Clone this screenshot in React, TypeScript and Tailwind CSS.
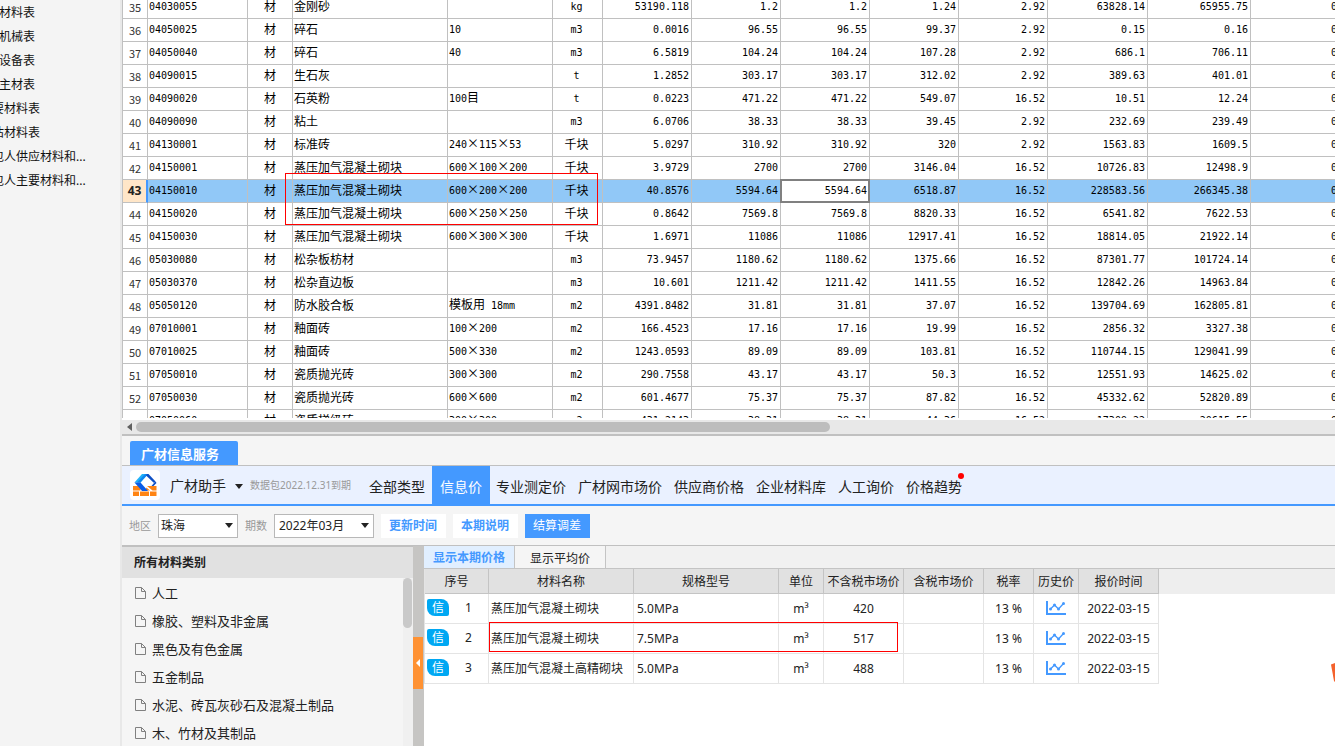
import React, { useState } from "react";

const UI_FONT = "font-['Noto_Sans','Noto_Sans_CJK_SC',sans-serif]";

const sideItems = [
  { label: "材料表", shift: "-ml-px" },
  { label: "机械表", shift: "-ml-px" },
  { label: "设备表", shift: "-ml-px" },
  { label: "主材表", shift: "-ml-px" },
  { label: "要材料表", shift: "-ml-2" },
  { label: "估材料表", shift: "-ml-2" },
  { label: "包人供应材料和...", shift: "-ml-2" },
  { label: "包人主要材料和...", shift: "-ml-2" },
];

// no, code, name, spec, unit, qty, price, market price, taxed price, rate, total, taxed total
const rows = [
  ["35", "04030055", "金刚砂", "", "kg", "53190.118", "1.2", "1.2", "1.24", "2.92", "63828.14", "65955.75"],
  ["36", "04050025", "碎石", "10", "m3", "0.0016", "96.55", "96.55", "99.37", "2.92", "0.15", "0.16"],
  ["37", "04050040", "碎石", "40", "m3", "6.5819", "104.24", "104.24", "107.28", "2.92", "686.1", "706.11"],
  ["38", "04090015", "生石灰", "", "t", "1.2852", "303.17", "303.17", "312.02", "2.92", "389.63", "401.01"],
  ["39", "04090020", "石英粉", "100目", "t", "0.0223", "471.22", "471.22", "549.07", "16.52", "10.51", "12.24"],
  ["40", "04090090", "粘土", "", "m3", "6.0706", "38.33", "38.33", "39.45", "2.92", "232.69", "239.49"],
  ["41", "04130001", "标准砖", "240×115×53", "千块", "5.0297", "310.92", "310.92", "320", "2.92", "1563.83", "1609.5"],
  ["42", "04150001", "蒸压加气混凝土砌块", "600×100×200", "千块", "3.9729", "2700", "2700", "3146.04", "16.52", "10726.83", "12498.9"],
  ["43", "04150010", "蒸压加气混凝土砌块", "600×200×200", "千块", "40.8576", "5594.64", "5594.64", "6518.87", "16.52", "228583.56", "266345.38"],
  ["44", "04150020", "蒸压加气混凝土砌块", "600×250×250", "千块", "0.8642", "7569.8", "7569.8", "8820.33", "16.52", "6541.82", "7622.53"],
  ["45", "04150030", "蒸压加气混凝土砌块", "600×300×300", "千块", "1.6971", "11086", "11086", "12917.41", "16.52", "18814.05", "21922.14"],
  ["46", "05030080", "松杂板枋材", "", "m3", "73.9457", "1180.62", "1180.62", "1375.66", "16.52", "87301.77", "101724.14"],
  ["47", "05030370", "松杂直边板", "", "m3", "10.601", "1211.42", "1211.42", "1411.55", "16.52", "12842.26", "14963.84"],
  ["48", "05050120", "防水胶合板", "模板用 18mm", "m2", "4391.8482", "31.81", "31.81", "37.07", "16.52", "139704.69", "162805.81"],
  ["49", "07010001", "釉面砖", "100×200", "m2", "166.4523", "17.16", "17.16", "19.99", "16.52", "2856.32", "3327.38"],
  ["50", "07010025", "釉面砖", "500×330", "m2", "1243.0593", "89.09", "89.09", "103.81", "16.52", "110744.15", "129041.99"],
  ["51", "07050010", "瓷质抛光砖", "300×300", "m2", "290.7558", "43.17", "43.17", "50.3", "16.52", "12551.93", "14625.02"],
  ["52", "07050030", "瓷质抛光砖", "600×600", "m2", "601.4677", "75.37", "75.37", "87.82", "16.52", "45332.62", "52820.89"],
  ["53", "07050060", "瓷质梯级砖", "300×300", "m2", "431.2143", "38.31", "38.31", "44.36", "16.52", "17309.22", "20615.55"],
];

const navTabs = ["专业测定价", "广材网市场价", "供应商价格", "企业材料库", "人工询价", "价格趋势"];

const categories = [
  "人工",
  "橡胶、塑料及非金属",
  "黑色及有色金属",
  "五金制品",
  "水泥、砖瓦灰砂石及混凝土制品",
  "木、竹材及其制品",
];

const prices = [
  { name: "蒸压加气混凝土砌块", spec: "5.0MPa", price: "420" },
  { name: "蒸压加气混凝土砌块", spec: "7.5MPa", price: "517" },
  { name: "蒸压加气混凝土高精砌块", spec: "5.0MPa", price: "488" },
];

// Latin runs take half the width of a Chinese character, the × sign a full one
const GridText = ({ text }: { text: string }) => (
  <>
    {text.split(/([\x20-\x7e]+|×)/).map((part, i) => {
      if (part === "×") {
        return (
          <span key={i} className="inline-block w-3 text-center">
            ×
          </span>
        );
      }
      if (/^[\x20-\x7e]+$/.test(part)) {
        return (
          <span key={i} className="text-[10px] whitespace-pre font-['DejaVu_Sans_Mono',monospace]">
            {part}
          </span>
        );
      }
      return part;
    })}
  </>
);

const Cell = ({ text, className = "" }: { text: string; className?: string }) => (
  <td className={`h-[23px] pt-0 pb-0.5 border-r border-b border-[#c0c0c0] overflow-hidden ${className}`}>
    <GridText text={text} />
  </td>
);

const MaterialGrid = () => (
  <div className="relative h-[418px] shrink-0 overflow-hidden bg-white">
    <table className="-mt-1 w-[1219px] table-fixed border-separate border-spacing-0 border-l border-[#c0c0c0] text-[12px] leading-[18px] text-black font-['Noto_Sans_CJK_SC',sans-serif]">
      <colgroup>
        <col className="w-[25px]" />
        <col className="w-[100px]" />
        <col className="w-[45px]" />
        <col className="w-[155px]" />
        <col className="w-[105px]" />
        <col className="w-[50px]" />
        <col className="w-[89px]" />
        <col className="w-[89px]" />
        <col className="w-[89px]" />
        <col className="w-[89px]" />
        <col className="w-[89px]" />
        <col className="w-[100px]" />
        <col className="w-[103px]" />
        <col className="w-[90px]" />
      </colgroup>
      <tbody>
        {rows.map(([no, code, name, spec, unit, ...nums]) => {
          const selected = no === "43";
          return (
            <tr key={no} className={selected ? "bg-[#91c8f7]" : "bg-white"}>
              <th
                scope="row"
                className={
                  selected
                    ? "h-[23px] p-0 border-r-2 border-b border-r-[#4499ff] border-b-[#c0c0c0] bg-[#ffe6c8] text-[12px] font-bold text-[#222] font-['Noto_Sans',sans-serif]"
                    : "h-[23px] p-0 border-r border-b border-[#c0c0c0] text-[11px] font-normal text-[#333]"
                }
              >
                {no}
              </th>
              <Cell text={code} className="pl-px" />
              <Cell text="材" className="text-center" />
              <Cell text={name} className="pl-px" />
              <Cell text={spec} className="pl-px" />
              <Cell text={unit} className="pr-0.5 text-center" />
              {nums.map((n, i) =>
                selected && i === 2 ? (
                  <td key={i} className="relative h-[23px] bg-white border-r border-b border-[#c0c0c0] pt-0 pb-0.5 pr-0.5 text-right">
                    <GridText text={n} />
                    <span className="absolute -inset-px border-2 border-[#808080]" />
                  </td>
                ) : (
                  <Cell key={i} text={n} className="pr-0.5 text-right" />
                )
              )}
              <Cell text="0" className="pr-[3px] text-right" />
            </tr>
          );
        })}
      </tbody>
    </table>
    {/* red mark over rows 43 and 44 */}
    <div className="absolute left-[163px] top-[173px] h-[52px] w-[313px] border border-[#f00]" />
  </div>
);

const DownArrow = ({ className = "" }: { className?: string }) => (
  <svg className={className} width="8" height="5" viewBox="0 0 8 5" fill="#222">
    <path d="M0 0h8L4 5z" />
  </svg>
);

const Logo = () => (
  <svg width="30" height="30" viewBox="0 0 30 30" className="shrink-0">
    <rect width="30" height="30" rx="4" fill="#fff" />
    <path d="M3 16h7.500v4.500H3zM3 21.500h6v4.500H3zM10 21.500h9v4.500h-9zM20 21.500h6.500v4.500H20z" fill="#ff8412" />
    <path d="M17 16h9.500v4.500h-4z" fill="#ff8412" />
    <path d="M16.500 17.500l3.500 3h-5z" fill="#ff8412" />
    <path d="M12 4h6l-7.500 8.500H4.500z" fill="#20b2f8" />
    <path d="M15 4h3l-7.500 8.500H7z" fill="#0f86f0" />
    <path d="M4.500 12.500h6L18 21h-6z" fill="#0a5ce6" />
    <path d="M17 4h1.500L25.500 11.500l-1.500 1.500L16 5.500z" fill="#0d4fc4" />
    <path d="M25.500 11.500l-1.500 1.500-2.500 3h2l3-3z" fill="#0d4fc4" />
  </svg>
);

const FileIcon = () => (
  <svg width="11" height="12" viewBox="0 0 11 12" fill="none" stroke="#808080" className="shrink-0">
    <path d="M.5 .5h6l4 4v7h-10z" />
    <path d="M6.500 .5v4h4" />
  </svg>
);

const TrendIcon = () => (
  <svg width="20" height="14" viewBox="0 0 20 14" fill="none" stroke="#4499ff">
    <path d="M1 0v13h19" strokeWidth="2" />
    <path d="M4.500 8L8.500 4l4 4L17.500 2.500" strokeWidth="1.300" />
    <g fill="#4499ff" stroke="none">
      <circle cx="4.500" cy="8" r="1.500" />
      <circle cx="8.500" cy="4" r="1.500" />
      <circle cx="12.500" cy="8" r="1.500" />
      <circle cx="17.500" cy="2.500" r="1.500" />
    </g>
  </svg>
);

const Header = () => (
  <header className="flex h-10 shrink-0 items-stretch bg-[#eaf1ff] border-b-2 border-[#4499ff] pl-2 text-[14px] text-[#222] whitespace-nowrap">
    <div className="flex items-center">
      <Logo />
      <button className="ml-2.5 flex items-center gap-[9px] pt-0.5">
        广材助手
        <DownArrow />
      </button>
      <span className="ml-[7px] w-[112px] text-[10px] text-[#999]">数据包2022.12.31到期</span>
    </div>
    <nav className="flex items-stretch">
      <button className="px-[7px] pt-1">全部类型</button>
      <button className="bg-[#4499ff] px-2 pt-1 text-white">信息价</button>
      {navTabs.map((tab) => (
        <button key={tab} className="relative px-1.5 pt-1">
          {tab}
          {tab === "价格趋势" && (
            <span className="absolute right-1 top-[7px] size-1.5 rounded-full bg-[#f00]" />
          )}
        </button>
      ))}
    </nav>
  </header>
);

const Filters = () => {
  const [area, setArea] = useState("珠海");
  const [period, setPeriod] = useState("2022年03月");
  return (
    <div className="flex h-[39px] shrink-0 items-center bg-[#f5f5f5] pl-[7px] text-[12px] text-[#222]">
      <label htmlFor="area" className="text-[11px] text-[#999]">
        地区
      </label>
      <div className="relative ml-[7px] w-20">
        <select
          id="area"
          value={area}
          onChange={(e) => setArea(e.target.value)}
          className="h-6 w-full appearance-none border border-[#b8b8b8] bg-white pl-0.5"
        >
          <option>珠海</option>
        </select>
        <DownArrow className="pointer-events-none absolute right-[5px] top-[9px]" />
      </div>
      <label htmlFor="period" className="ml-[7px] text-[11px] text-[#999]">
        期数
      </label>
      <div className="relative ml-[7px] w-[100px]">
        <select
          id="period"
          value={period}
          onChange={(e) => setPeriod(e.target.value)}
          className="h-6 w-full appearance-none border border-[#b8b8b8] bg-white pl-1"
        >
          <option>2022年03月</option>
        </select>
        <DownArrow className="pointer-events-none absolute right-[5px] top-[9px]" />
      </div>
      <div className="ml-[7px] flex gap-[7px]">
        <button className="h-6 w-[65px] bg-white pr-px font-bold text-[#4499ff]">更新时间</button>
        <button className="h-6 w-[65px] bg-white pr-px font-bold text-[#4499ff]">本期说明</button>
        <button className="h-6 w-[65px] bg-[#4499ff] pr-px text-white">结算调差</button>
      </div>
    </div>
  );
};

const CategoryList = () => (
  <aside className="flex w-[291px] shrink-0 flex-col border-t border-[#c0c0c0] bg-[#f5f5f5]">
    <h2 className="flex h-[31px] shrink-0 items-center bg-[#e1e1e1] pl-3 text-[12px] font-bold text-[#222]">
      所有材料类别
    </h2>
    <div className="flex min-h-0 flex-1 overflow-hidden">
      <ul className="flex-1 pt-px text-[13px] text-[#222]">
        {categories.map((c) => (
          <li key={c}>
            <button className="flex h-7 w-full items-center gap-1.5 pl-[13px]">
              <FileIcon />
              {c}
            </button>
          </li>
        ))}
      </ul>
      <div className="w-2.5 bg-[#f0f0f0]">
        <div className="h-[50px] w-[9px] rounded-full bg-[#c9c9c9]" />
      </div>
    </div>
  </aside>
);

const headClass = "h-[25px] pt-0.5 px-0 pb-0 bg-[#e1e1e1] border-r border-b border-[#c4c4c4] font-normal";
const bodyClass = "h-[30px] p-0 border-r border-b border-[#e4e4e4]";

const PriceTable = () => (
  <div className="relative min-h-0 flex-1 overflow-hidden bg-white bg-[linear-gradient(#eeeeee,#eeeeee)] bg-[length:100%_25px] bg-no-repeat">
    <table className="w-[735px] table-fixed border-separate border-spacing-0 border-l border-[#e4e4e4] bg-white text-[12px] text-[#222] whitespace-nowrap">
      <colgroup>
        <col className="w-[64px]" />
        <col className="w-[145px]" />
        <col className="w-[145px]" />
        <col className="w-[45px]" />
        <col className="w-[80px]" />
        <col className="w-[80px]" />
        <col className="w-[50px]" />
        <col className="w-[45px]" />
        <col className="w-[80px]" />
      </colgroup>
      <thead>
        <tr>
          {["序号", "材料名称", "规格型号", "单位", "不含税市场价", "含税市场价", "税率", "历史价", "报价时间"].map((h) => (
            <th key={h} scope="col" className={headClass}>
              {h}
            </th>
          ))}
        </tr>
      </thead>
      <tbody>
        {prices.map((p, i) => (
          <tr key={i}>
            <td className={bodyClass}>
              <div className="flex items-center pb-0.5 pl-0.5">
                <span className="flex h-[17px] w-[22px] items-center justify-center rounded-[2px] rounded-tr-[8px] rounded-bl-[8px] bg-[#00a8f3] text-[12px] text-white">
                  信
                </span>
                <span className="flex-1 text-center">{i + 1}</span>
              </div>
            </td>
            <td className={`${bodyClass} pl-0.5`}>{p.name}</td>
            <td className={`${bodyClass} pl-[3px]`}>{p.spec}</td>
            <td className={`${bodyClass} text-center`}>m³</td>
            <td className={`${bodyClass} text-center`}>{p.price}</td>
            <td className={bodyClass}></td>
            <td className={`${bodyClass} text-center`}>13 %</td>
            <td className={bodyClass}>
              <button className="flex w-full justify-center pb-0.5" aria-label="历史价">
                <TrendIcon />
              </button>
            </td>
            <td className={`${bodyClass} text-center`}>2022-03-15</td>
          </tr>
        ))}
      </tbody>
    </table>
    {/* red mark over the 7.5MPa row */}
    <div className="absolute left-[65px] top-[53px] h-[30px] w-[409px] border border-[#f00]" />
    {/* floating helper peeking in from the edge */}
    <svg className="absolute right-0 top-[94px]" width="4" height="20" viewBox="0 0 4 20">
      <path d="M0 1.500L4 0v19l-1-1z" fill="#f4622d" />
    </svg>
  </div>
);

const App = () => {
  return (
    <div className={`flex h-screen overflow-hidden bg-white leading-[18px] ${UI_FONT}`}>
      <aside className="w-[122px] shrink-0 overflow-hidden border-r-2 border-[#e8e8e8] bg-[#f4f4f4] pt-px">
        <ul className="text-[12px] text-[#111] whitespace-nowrap">
          {sideItems.map((item) => (
            <li key={item.label} className={`flex h-6 items-center ${item.shift}`}>
              <a href="#">{item.label}</a>
            </li>
          ))}
        </ul>
      </aside>

      <main className="flex min-w-0 flex-1 flex-col">
        <MaterialGrid />

        {/* horizontal scrollbar */}
        <div className="flex h-4 shrink-0 items-center border-t-2 border-white bg-[#e8e8e8] pl-[5px]">
          <svg width="5" height="8" viewBox="0 0 5 8" fill="#606060">
            <path d="M5 0v8L0 4z" />
          </svg>
          <div className="ml-1 h-2.5 w-[694px] rounded-full bg-[#bdbdbd]" />
        </div>

        <div className="flex h-8 shrink-0 items-end border-t-2 border-b border-[#c0c0c0] bg-[#f5f5f5] pl-2">
          <button className="h-6 w-[108px] rounded-t-[2px] bg-[#4499ff] pl-[11px] pt-0.5 text-left text-[13px] font-bold text-white">
            广材信息服务
          </button>
        </div>
        <Header />
        <Filters />

        <div className="flex min-h-0 flex-1 border-t border-[#c0c0c0]">
          <CategoryList />
          <div className="w-[11px] shrink-0 bg-[#c6c5c3] pt-[91px]">
            <button className="flex h-[52px] w-2.5 items-center justify-center bg-[#ff9233]" aria-label="收起">
              <svg width="4" height="8" viewBox="0 0 4 8" fill="#fff">
                <path d="M4 0v8L0 4z" />
              </svg>
            </button>
          </div>
          <section className="flex min-w-0 flex-1 flex-col">
            <div className="flex h-[23px] shrink-0 border-b border-[#c4c4c4] bg-[#f1f1f1] text-[12px]">
              <button className="w-[91px] border-r border-[#c4c4c4] bg-[#e1efff] pt-0.5 font-bold text-[#4499ff]">
                显示本期价格
              </button>
              <button className="w-[91px] border-r border-[#c4c4c4] bg-[#f5f5f5] pt-1 text-[#222]">
                显示平均价
              </button>
            </div>
            <PriceTable />
          </section>
        </div>
      </main>
    </div>
  );
};

export default App;
